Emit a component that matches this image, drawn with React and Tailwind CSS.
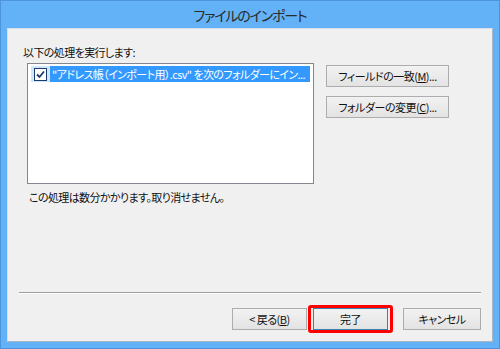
import React from 'react';

const font = { fontFamily: '"Noto Sans CJK JP", "Noto Sans", sans-serif' };

const Btn = ({ children, className = '' }) => (
  <button
    className={`h-[22px] whitespace-nowrap border border-[#adadad] bg-gradient-to-b from-[#f2f2f2] to-[#e3e3e3] text-[11px] tracking-[-0.5px] leading-none text-[#111] ${className}`}
  >
    {children}
  </button>
);

const Check = () => (
  <svg width="13" height="13" viewBox="0 0 13 13">
    <rect x="0.5" y="0.5" width="12" height="12" fill="#fff" stroke="#1c3a6e" />
    <path d="M3 6.5 L5.5 9 L10 3.5" fill="none" stroke="#1c3a6e" strokeWidth="1.8" />
  </svg>
);

export default function App() {
  return (
    <div style={font} className="w-[500px] h-[349px] bg-[#63b1f6] border border-[#4d94dc] flex flex-col [font-feature-settings:'palt']">
      <div className="h-[27px] flex items-center justify-center text-[14px] tracking-[-1.2px] text-[#2a2a2a] pt-[2px]">
        ファイルのインポート
      </div>

      <div className="mx-[6px] mb-[6px] flex-1 flex flex-col bg-[#f0f0f0] border border-[#d5dfea] border-r-[#a9b6c4] border-b-[#a9b6c4] text-[11px] tracking-[-0.6px] leading-[16px] text-[#111]">
        <div className="pl-[15px] pt-[15px]">以下の処理を実行します:</div>

        <div className="flex items-start mt-[3px] pl-[19px]">
          <div className="w-[287px] h-[121px] bg-white border border-[#828790] px-[3px] pt-[2px]">
            <div className="flex h-[16px] items-center">
              <span className="h-full flex items-center px-[3px] bg-[#cfe6fc]">
                <Check />
              </span>
              <span className="h-full flex-1 bg-[#3399ff] text-white whitespace-nowrap overflow-hidden pl-[2px]">
                "アドレス帳（インポート用）.csv" を次のフォルダーにイン...
              </span>
            </div>
          </div>

          <div className="ml-[12px] mt-[2px] flex flex-col gap-[9px]">
            <Btn className="w-[123px]">
              フィールドの一致(<span className="underline">M</span>)...
            </Btn>
            <Btn className="w-[123px]">
              フォルダーの変更(<span className="underline">C</span>)...
            </Btn>
          </div>
        </div>

        <div className="pl-[21px] mt-[5px]">
          この処理は数分かかります。取り消せません。
        </div>

        <div className="flex-1" />

        <div className="mx-[11px] h-[2px] border-t border-[#a0a0a0] border-b border-b-white" />

        <div className="flex justify-end items-center pr-[11px] mt-[14px] mb-[11px]">
          <Btn className="w-[75px]">
            &lt; 戻る(<span className="underline">B</span>)
          </Btn>
          <div className="relative ml-[6px]">
            <span className="absolute -left-[5px] -right-[5px] -top-[3px] -bottom-[3px] border-[3px] border-[#ff0000] rounded-[3px]" />
            <Btn className="w-[75px] !border-[#3c7fb1] block">完了</Btn>
          </div>
          <Btn className="w-[78px] ml-[15px]">キャンセル</Btn>
        </div>
      </div>
    </div>
  );
}
